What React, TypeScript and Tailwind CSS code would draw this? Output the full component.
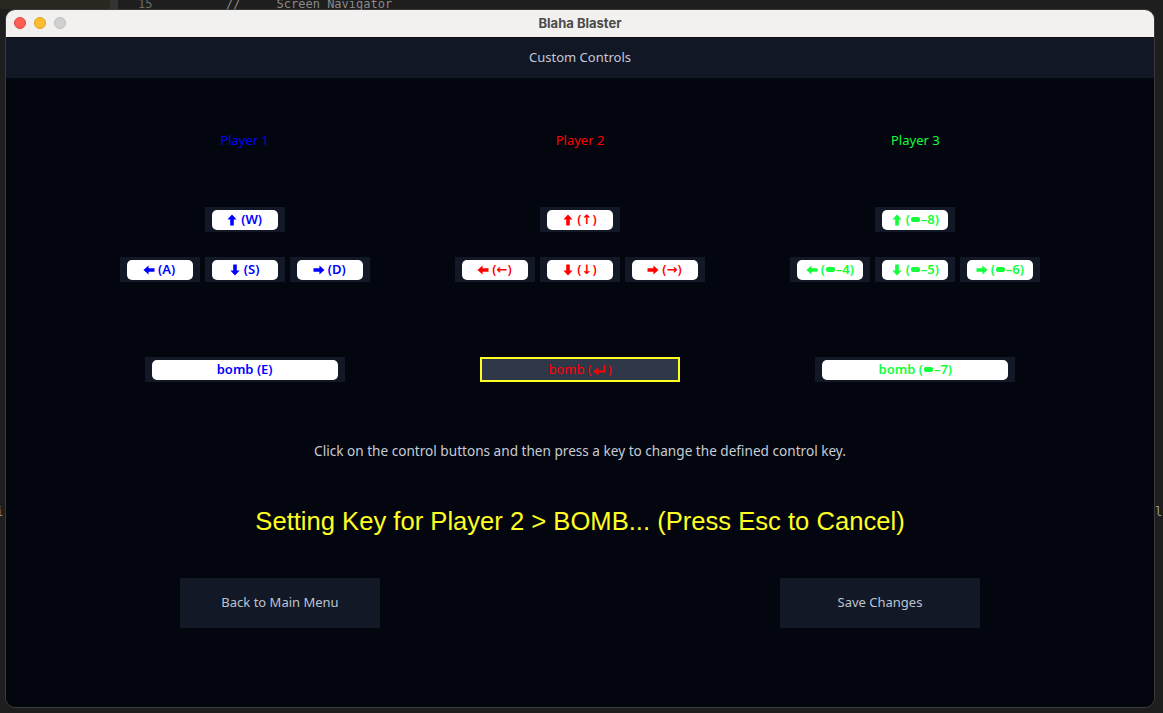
import type { ReactNode } from 'react'

type Dir = 'up' | 'down' | 'left' | 'right'

function Arrow({ dir }: { dir: Dir }) {
  const rot = { up: 0, right: 90, down: 180, left: 270 }[dir]
  return (
    <svg viewBox="0 0 10 12" className="w-[10px] h-[12px] mr-[4px]" style={{ transform: `rotate(${rot}deg)` }}>
      <path d="M5 0.5 L9.6 5.6 H6.8 V11.5 H3.2 V5.6 H0.4 Z" fill="currentColor" />
    </svg>
  )
}

function NumPad() {
  return <span className="inline-block w-[9px] h-[5px] rounded-[2px] bg-current mx-[1px]" />
}

function ReturnGlyph() {
  return (
    <svg viewBox="0 0 14 10" className="w-[14px] h-[10px] mx-[1px]">
      <path d="M11.5 0 V6.5 H4" stroke="currentColor" strokeWidth="2.2" fill="none" />
      <path d="M0 6.5 L5.5 2.5 V10.5 Z" fill="currentColor" />
    </svg>
  )
}

function KeyCell({ children, wide }: { children: ReactNode; wide?: boolean }) {
  return (
    <div className={`${wide ? 'w-[200px]' : 'w-[80px]'} h-[25px] bg-[#121826] flex items-center justify-center`}>
      <div className={`${wide ? 'w-[186px]' : 'w-[66px]'} h-[20px] bg-white rounded-[5px] flex items-center justify-center text-[13px] font-semibold`}>
        {children}
      </div>
    </div>
  )
}

type Player = {
  name: string
  color: string
  up: ReactNode
  left: ReactNode
  down: ReactNode
  right: ReactNode
  bomb: ReactNode
  active?: boolean
}

const players: Player[] = [
  { name: 'Player 1', color: 'text-[#0000ff]', up: '(W)', left: '(A)', down: '(S)', right: '(D)', bomb: 'bomb (E)' },
  { name: 'Player 2', color: 'text-[#ff0000]', up: '(↑)', left: '(←)', down: '(↓)', right: '(→)', bomb: <>bomb (<ReturnGlyph />)</>, active: true },
  {
    name: 'Player 3',
    color: 'text-[#11ff3a]',
    up: <>(<NumPad />–8)</>,
    left: <>(<NumPad />–4)</>,
    down: <>(<NumPad />–5)</>,
    right: <>(<NumPad />–6)</>,
    bomb: <>bomb (<NumPad />–7)</>,
  },
]

function PlayerColumn({ p }: { p: Player }) {
  return (
    <div className={`flex flex-col items-center ${p.color}`}>
      <div className="text-[13px] leading-[16px] h-[16px]">{p.name}</div>
      <div className="mt-[59px]">
        <KeyCell><Arrow dir="up" />{p.up}</KeyCell>
      </div>
      <div className="mt-[25px] flex gap-[5px]">
        <KeyCell><Arrow dir="left" />{p.left}</KeyCell>
        <KeyCell><Arrow dir="down" />{p.down}</KeyCell>
        <KeyCell><Arrow dir="right" />{p.right}</KeyCell>
      </div>
      <div className="mt-[75px]">
        {p.active ? (
          <div className="w-[200px] h-[25px] border-2 border-[#ffff22] bg-[#2e3848] flex items-center justify-center text-[13px]">
            {p.bomb}
          </div>
        ) : (
          <KeyCell wide>{p.bomb}</KeyCell>
        )}
      </div>
    </div>
  )
}

export default function App() {
  return (
    <div className="w-[1163px] h-[713px] bg-[#1e1e1e] relative overflow-hidden" style={{ fontFamily: '"Noto Sans", "DejaVu Sans", sans-serif' }}>
      {/* editor behind the window */}
      <div className="absolute top-0 left-0 w-[110px] h-[9px] bg-[#2a2620]" />
      <div className="absolute top-0 left-[110px] w-[8px] h-[9px] bg-[#333333]" />
      <div className="absolute top-[-5px] left-[138px] text-[12px] text-[#6b6b6b]" style={{ fontFamily: '"DejaVu Sans Mono", monospace' }}>15</div>
      <div className="absolute top-[-5px] left-[226px] text-[12px] text-[#8a8a8a]" style={{ fontFamily: '"DejaVu Sans Mono", monospace' }}>//&nbsp;&nbsp;&nbsp;&nbsp;&nbsp;Screen Navigator</div>
      <div className="absolute top-[503px] left-[-4px] text-[12px] text-[#9a9a9a]" style={{ fontFamily: '"DejaVu Sans Mono", monospace' }}>i</div>
      <div className="absolute top-[503px] left-[1155px] text-[12px] text-[#9a9a9a]" style={{ fontFamily: '"DejaVu Sans Mono", monospace' }}>l</div>

      <div className="pt-[9px] pl-[5px] pr-[8px] h-full">
        <div className="w-[1150px] h-[699px] rounded-[10px] overflow-hidden flex flex-col border border-[#3a3a3a]">
          <div className="h-[28px] bg-[#f2f1ef] relative flex items-center justify-center border-b border-[#0c0c0c]">
            <div className="absolute left-[8px] top-[7px] flex gap-[8px]">
              <span className="w-[12px] h-[12px] rounded-full bg-[#fe5f57] border border-[#e0443e]" />
              <span className="w-[12px] h-[12px] rounded-full bg-[#febc2e] border border-[#dea123]" />
              <span className="w-[12px] h-[12px] rounded-full bg-[#d0d0d0] border border-[#bcbcbc]" />
            </div>
            <div className="text-[13px] font-bold text-[#4b4b4b]" style={{ fontFamily: 'Inter, "Noto Sans", sans-serif' }}>Blaha Blaster</div>
          </div>

          <div className="h-[40px] bg-[#121725] flex items-center justify-center text-[13px] text-[#c3c9d6]">
            Custom Controls
          </div>

          <div className="flex-1 bg-[#03060f] flex flex-col">
            <div className="pt-[54px] px-[71px] grid grid-cols-3">
              {players.map((p) => (
                <PlayerColumn key={p.name} p={p} />
              ))}
            </div>

            <div className="mt-[61px] text-center text-[13.6px] leading-[16px] text-[#c8ccd4]">
              Click on the control buttons and then press a key to change the defined control key.
            </div>

            <div
              className="mt-[47px] text-center text-[25.6px] leading-[30px] text-[#ffff22]"
              style={{ fontFamily: '"Liberation Sans", Arial, sans-serif' }}
            >
              Setting Key for Player 2 &gt; BOMB... (Press Esc to Cancel)
            </div>

            <div className="mt-[42px] flex justify-center gap-[400px]">
              <button className="w-[200px] h-[50px] bg-[#121826] text-[13px] text-[#bcc4d2]">Back to Main Menu</button>
              <button className="w-[200px] h-[50px] bg-[#121826] text-[13px] text-[#bcc4d2]">Save Changes</button>
            </div>
          </div>
        </div>
      </div>
    </div>
  )
}
